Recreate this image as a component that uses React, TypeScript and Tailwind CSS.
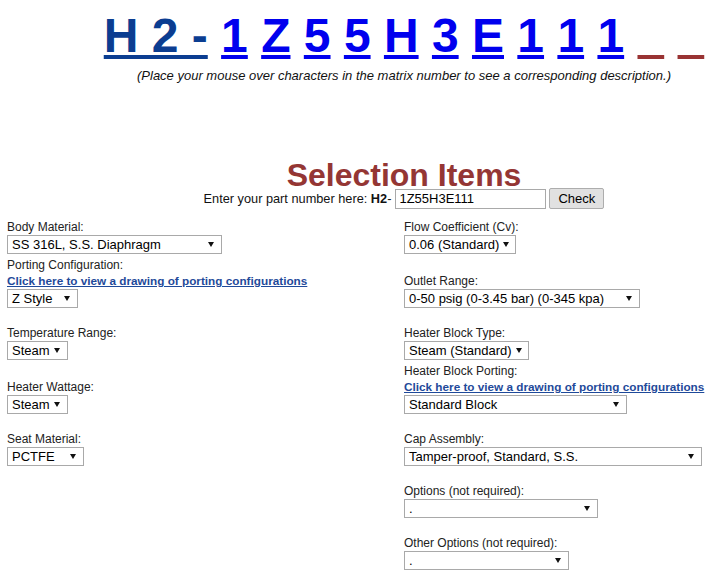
import React from "react";

const matrix = ["1", "Z", "5", "5", "H", "3", "E", "1", "1", "1"];

function Select({ value, className }: { value: string; className: string }) {
  return (
    <div
      className={`flex h-[19px] items-center justify-between border border-[#a9a9a9] bg-white pl-[4px] pr-[7px] text-[13px] leading-none text-black ${className}`}
    >
      <span className="whitespace-nowrap">{value}</span>
      <svg width="6" height="5" viewBox="0 0 6 5" className="ml-[4px] shrink-0">
        <path d="M0 0h6L3 5z" fill="#111" />
      </svg>
    </div>
  );
}

function Label({ children }: { children: React.ReactNode }) {
  return <div className="text-[12px] leading-[16px] text-[#222]">{children}</div>;
}

function DrawingLink() {
  return (
    <a href="#" className="text-[11.75px] font-bold leading-[16px] text-[#1f4a9a] underline">
      Click here to view a drawing of porting configurations
    </a>
  );
}

export default function App() {
  return (
    <div className="min-h-[578px] bg-white font-['Liberation_Sans',Arial,sans-serif] text-black">
      {/* matrix number + part entry */}
      <div className="pl-[94px] pt-[8px] text-center">
        <div className="whitespace-pre text-[48px] font-bold leading-[55px]">
          <a href="#" className="text-[#0b3d91] underline">
            H 2 -
          </a>
          {matrix.map((c, i) => (
            <span key={i}>
              {" "}
              <a href="#" className="text-[#0000ee] underline">
                {c}
              </a>
            </span>
          ))}
          {[0, 1].map((i) => (
            <span key={"blank" + i}>
              {" "}
              <a href="#" className="text-transparent underline decoration-[#993333]">
                5
              </a>
            </span>
          ))}
        </div>
        <p className="mt-[5px] text-[13px] italic leading-[15px] text-[#111]">
          (Place your mouse over characters in the matrix number to see a corresponding description.)
        </p>

        <h1 className="mt-[80px] text-[32px] font-bold leading-[25px] text-[#943634]">Selection Items</h1>
        <div className="flex items-center justify-center text-[12.75px] text-[#111]">
          <span className="whitespace-pre">
            Enter your part number here: <b>H2</b>-
          </span>
          <input
            readOnly
            value="1Z55H3E111"
            className="ml-[4px] h-[20px] w-[151px] border border-[#a9a9a9] px-[3px] text-[13px] text-black outline-none"
          />
          <button className="ml-[3px] h-[21px] w-[55px] rounded-[2px] border border-[#adadad] bg-[#e1e1e1] text-[13px] text-black">
            Check
          </button>
        </div>
      </div>

      {/* selection grid */}
      <div className="mt-[10px] grid grid-cols-[397px_1fr] grid-rows-[35px_54px_52px_54px_52px_52px_52px] items-end pl-[7px]">
        <div className="flex flex-col items-start">
          <Label>Body Material:</Label>
          <Select value="SS 316L, S.S. Diaphragm" className="w-[215px]" />
        </div>
        <div className="flex flex-col items-start">
          <Label>Flow Coefficient (Cv):</Label>
          <Select value="0.06 (Standard)" className="w-[112px]" />
        </div>

        <div className="flex flex-col items-start">
          <Label>Porting Configuration:</Label>
          <DrawingLink />
          <Select value="Z Style" className="w-[71px]" />
        </div>
        <div className="flex flex-col items-start">
          <Label>Outlet Range:</Label>
          <Select value="0-50 psig (0-3.45 bar) (0-345 kpa)" className="w-[236px]" />
        </div>

        <div className="flex flex-col items-start">
          <Label>Temperature Range:</Label>
          <Select value="Steam" className="w-[61px]" />
        </div>
        <div className="flex flex-col items-start">
          <Label>Heater Block Type:</Label>
          <Select value="Steam (Standard)" className="w-[125px]" />
        </div>

        <div className="flex flex-col items-start">
          <Label>Heater Wattage:</Label>
          <Select value="Steam" className="w-[61px]" />
        </div>
        <div className="flex flex-col items-start">
          <Label>Heater Block Porting:</Label>
          <DrawingLink />
          <Select value="Standard Block" className="w-[223px]" />
        </div>

        <div className="flex flex-col items-start">
          <Label>Seat Material:</Label>
          <Select value="PCTFE" className="w-[77px]" />
        </div>
        <div className="flex flex-col items-start">
          <Label>Cap Assembly:</Label>
          <Select value="Tamper-proof, Standard, S.S." className="w-[298px]" />
        </div>

        <div />
        <div className="flex flex-col items-start">
          <Label>Options (not required):</Label>
          <Select value="." className="w-[194px]" />
        </div>

        <div />
        <div className="flex flex-col items-start">
          <Label>Other Options (not required):</Label>
          <Select value="." className="w-[165px]" />
        </div>
      </div>
    </div>
  );
}
